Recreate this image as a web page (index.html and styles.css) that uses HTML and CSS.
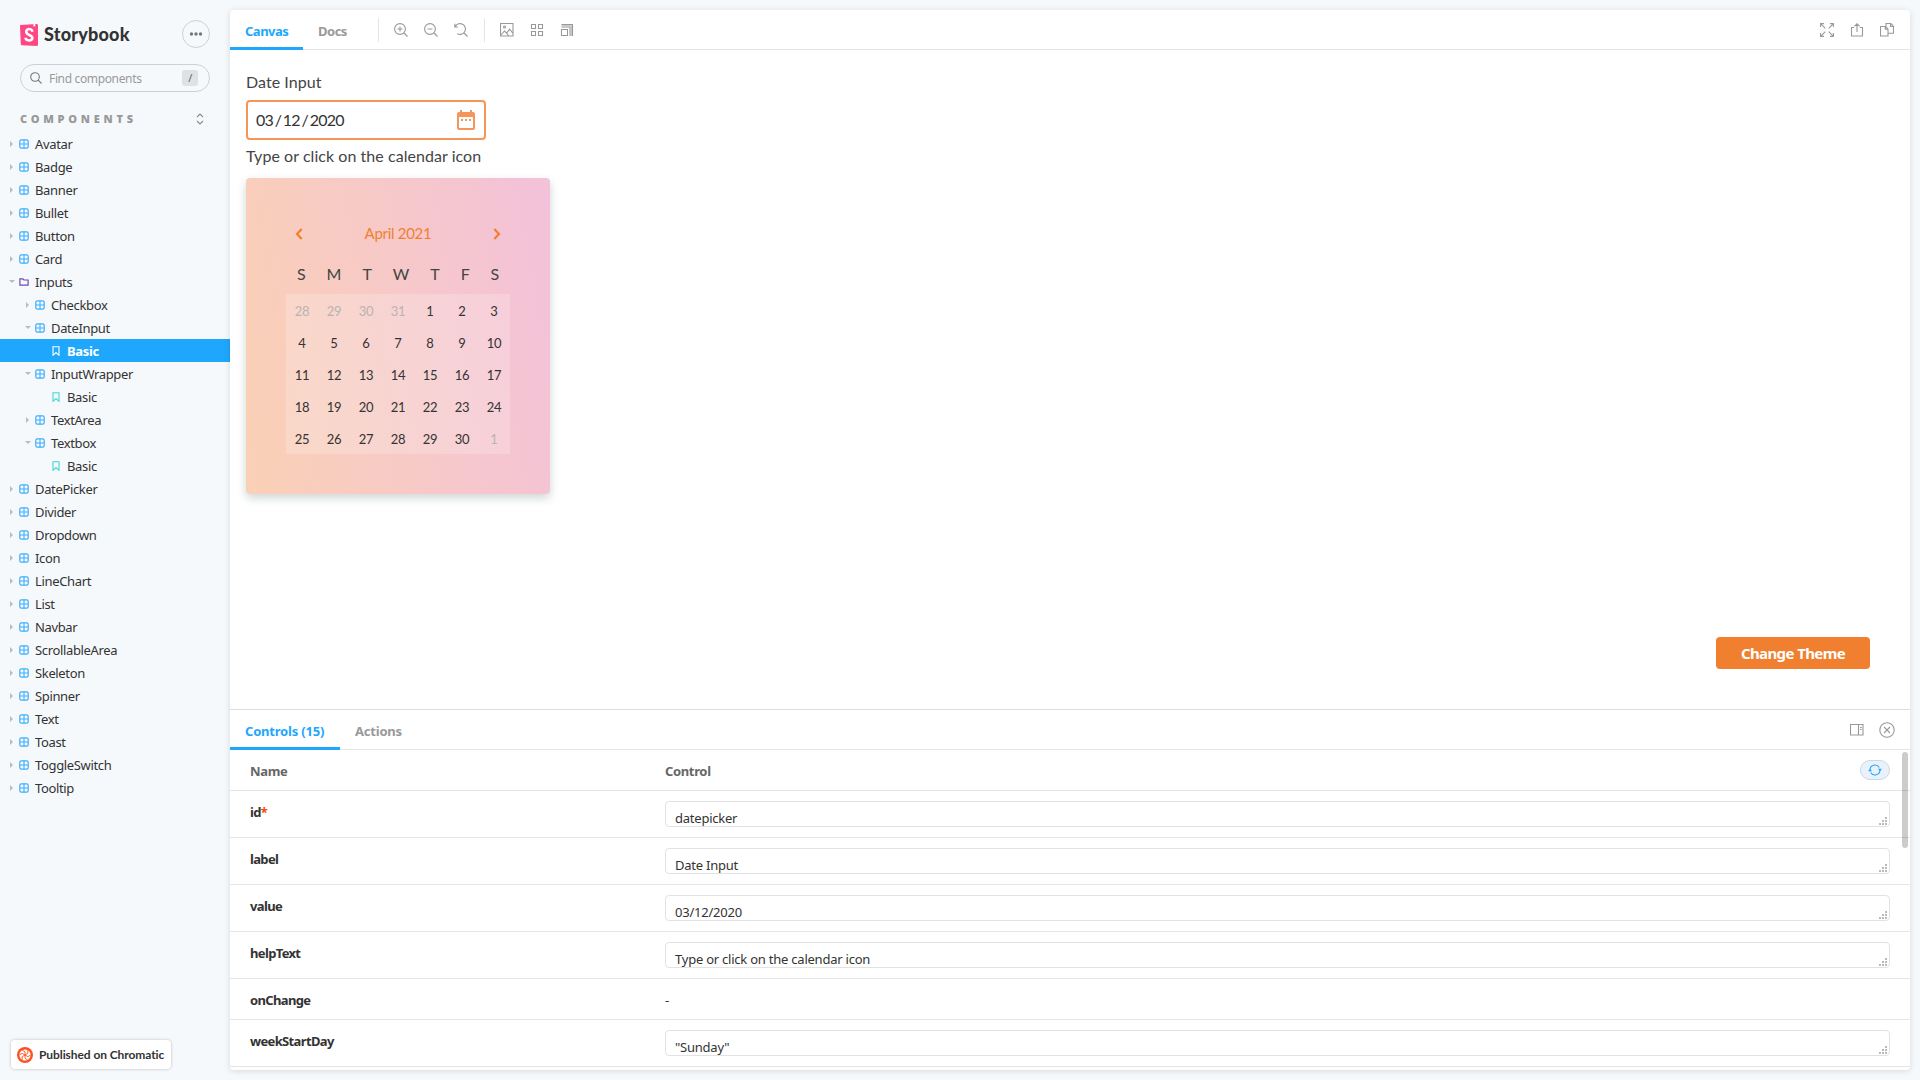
FILE: index.html
```html
<!DOCTYPE html>
<html lang="en">
<head>
<meta charset="utf-8">
<title>DateInput - Basic ⋅ Storybook</title>
<link rel="stylesheet" href="styles.css">
</head>
<body>
<svg class="sprite" aria-hidden="true">
  <symbol id="component" viewBox="0 0 10 10"><rect x=".8" y=".8" width="8.4" height="8.4" rx="1.6" fill="none" stroke="currentColor" stroke-width="1.2"/><path d="M5 1v8M1 5h8" stroke="currentColor" stroke-width="1.1"/></symbol>
  <symbol id="folder" viewBox="0 0 10 10"><path d="M.9 1.9h3l1 1.1h4.2v5.1H.9z" fill="none" stroke="currentColor" stroke-width="1.2"/></symbol>
  <symbol id="bookmark" viewBox="0 0 10 10"><path d="M2 .7h6v8.6L5 6.6 2 9.300z" fill="none" stroke="currentColor" stroke-width="1.1"/></symbol>
  <symbol id="grip" viewBox="0 0 8 8"><path d="M6 0h2v2H6zM3 3h2v2H3zM6 3h2v2H6zM0 6h2v2H0zM3 6h2v2H3zM6 6h2v2H6z" fill="#bbb"/></symbol>
</svg>

<aside class="sidebar">
  <header class="brand">
    <svg class="brand-mark" viewBox="0 0 18 22"><path d="M.2 1.1 16.600 0Q18 0 18 1.300v19.400Q18 22 16.600 22L1.900 21.300Q.9 21.200.8 20.200L0 2Q0 1.200.2 1.100z" fill="#ff4785"/><path d="M13.400.2 13.300 2.800l1-.8.9.7L15.300 0z" fill="#fff"/><path d="M12.300 7.800C12.300 4.300 6.200 4.200 6.200 7.700c0 3.800 6.200 2.900 6.200 6.300 0 3.400-6.800 3.200-6.800-.2" fill="none" stroke="#fff" stroke-width="2.500"/></svg>
    <span class="brand-name">Storybook</span>
    <button class="menu-button"><svg width="14" height="4" viewBox="0 0 14 4"><circle cx="2.500" cy="2" r="1.700"/><circle cx="7" cy="2" r="1.700"/><circle cx="11.500" cy="2" r="1.700"/></svg></button>
  </header>
  <div class="search">
    <svg class="search-icon" width="12" height="12" viewBox="0 0 12 12"><circle cx="5" cy="5" r="4.300"/><path d="m8.200 8.200 3.300 3.300"/></svg>
    <span class="search-text">Find components</span>
    <kbd>/</kbd>
  </div>
  <div class="section"><span>COMPONENTS</span><svg width="8" height="12" viewBox="0 0 8 12"><path d="m1 4 3-3 3 3M1 8l3 3 3-3"/></svg></div>
  <ul class="tree">
    <li><i class="caret"></i><svg><use href="#component"/></svg>Avatar</li>
    <li><i class="caret"></i><svg><use href="#component"/></svg>Badge</li>
    <li><i class="caret"></i><svg><use href="#component"/></svg>Banner</li>
    <li><i class="caret"></i><svg><use href="#component"/></svg>Bullet</li>
    <li><i class="caret"></i><svg><use href="#component"/></svg>Button</li>
    <li><i class="caret"></i><svg><use href="#component"/></svg>Card</li>
    <li class="group"><i class="caret open"></i><svg><use href="#folder"/></svg>Inputs</li>
    <li class="level-1"><i class="caret"></i><svg><use href="#component"/></svg>Checkbox</li>
    <li class="level-1"><i class="caret open"></i><svg><use href="#component"/></svg>DateInput</li>
    <li class="story selected"><svg><use href="#bookmark"/></svg>Basic</li>
    <li class="level-1"><i class="caret open"></i><svg><use href="#component"/></svg>InputWrapper</li>
    <li class="story"><svg><use href="#bookmark"/></svg>Basic</li>
    <li class="level-1"><i class="caret"></i><svg><use href="#component"/></svg>TextArea</li>
    <li class="level-1"><i class="caret open"></i><svg><use href="#component"/></svg>Textbox</li>
    <li class="story"><svg><use href="#bookmark"/></svg>Basic</li>
    <li><i class="caret"></i><svg><use href="#component"/></svg>DatePicker</li>
    <li><i class="caret"></i><svg><use href="#component"/></svg>Divider</li>
    <li><i class="caret"></i><svg><use href="#component"/></svg>Dropdown</li>
    <li><i class="caret"></i><svg><use href="#component"/></svg>Icon</li>
    <li><i class="caret"></i><svg><use href="#component"/></svg>LineChart</li>
    <li><i class="caret"></i><svg><use href="#component"/></svg>List</li>
    <li><i class="caret"></i><svg><use href="#component"/></svg>Navbar</li>
    <li><i class="caret"></i><svg><use href="#component"/></svg>ScrollableArea</li>
    <li><i class="caret"></i><svg><use href="#component"/></svg>Skeleton</li>
    <li><i class="caret"></i><svg><use href="#component"/></svg>Spinner</li>
    <li><i class="caret"></i><svg><use href="#component"/></svg>Text</li>
    <li><i class="caret"></i><svg><use href="#component"/></svg>Toast</li>
    <li><i class="caret"></i><svg><use href="#component"/></svg>ToggleSwitch</li>
    <li><i class="caret"></i><svg><use href="#component"/></svg>Tooltip</li>
  </ul>
  <a class="chromatic">
    <svg width="16" height="16" viewBox="0 0 16 16"><circle cx="8" cy="8" r="8" fill="#fc521f"/><circle cx="8" cy="8" r="5.600" fill="#fff"/><path d="M8 8V4.800L5.200 3.200M8 8l2.800-1.600V3.200M8 8l2.800 1.600 2.800-1.400M8 8v3.200l2.600 1.800M8 8l-2.800 1.600v3.200M8 8 5.200 6.400 2.400 7.800" fill="none" stroke="#fc521f" stroke-width=".9"/></svg>
    <span>Published on Chromatic</span>
  </a>
</aside>

<main class="panel">
  <nav class="bar toolbar">
    <a class="tab active">Canvas</a><a class="tab">Docs</a>
    <div class="tools">
      <svg viewBox="0 0 14 14"><circle cx="6" cy="6" r="5.400"/><path d="m10 10 3.500 3.500M3.500 6h5M6 3.500v5"/></svg>
      <svg viewBox="0 0 14 14"><circle cx="6" cy="6" r="5.400"/><path d="m10 10 3.500 3.500M3.500 6h5"/></svg>
      <svg viewBox="0 0 14 14"><path d="M1.300 3.400A5.400 5.400 0 1 1 3.200 10.600M.8.800v3.200H4M10 10l3.500 3.500"/></svg>
    </div>
    <div class="tools">
      <svg viewBox="0 0 14 14"><path d="M.5.5h12.500v12.500H.5zM.8 12 4.500 8l2 2.200 3.200-4L13 10.500M6 9.500l2.500 3"/><circle cx="4.500" cy="4" r="1"/></svg>
      <svg viewBox="0 0 14 14"><path d="M1.500 1.500h4v4h-4zM8.500 1.500h4v4h-4zM1.500 8.500h4v4h-4zM8.500 8.500h4v4h-4z"/></svg>
      <svg viewBox="0 0 14 14"><path d="M1.500 6.500h6v6h-6zM1.500 4h8.500v9M1.500 1.500h11V13" /><path class="soft" d="M1.500 2.800h9.800V13"/></svg>
    </div>
    <div class="tools end">
      <svg viewBox="0 0 14 14"><path d="M.6 4V.6H4M.8.800l4.500 4.500M10 .6h3.400V4M13.200.8 8.700 5.300M.6 10v3.400H4M.8 13.200l4.500-4.500M10 13.400h3.400V10M13.200 13.200 8.700 8.700"/></svg>
      <svg viewBox="0 0 14 14"><path d="M4 4.500H1.500v8.500h11V4.500H10M7 9V.8M4.400 3.400 7 .8l2.600 2.600"/></svg>
      <svg viewBox="0 0 14 14"><path d="M6 3.500V.5h4.800l2.700 2.700v7H8.500M10.500.8v2.700h2.700M.5 3.500h5l2.500 2.500v7H.5zM5.300 3.800v2.500h2.500"/></svg>
    </div>
  </nav>

  <section class="preview">
    <div class="label">Date Input</div>
    <div class="date-field">
      <span>03 / 12 / 2020</span>
      <svg width="18" height="20" viewBox="0 0 18 20"><path fill-rule="evenodd" d="M2 2h1V0h2v2h8V0h2v2h1q2 0 2 2v14q0 2-2 2H2q-2 0-2-2V4q0-2 2-2zm0 5v11h14V7z"/><path d="M4 9h2v2H4zM8 9h2v2H8zM12 9h2v2h-2z"/></svg>
    </div>
    <div class="label hint">Type or click on the calendar icon</div>
    <div class="calendar">
      <div class="month"><svg width="8" height="12" viewBox="0 0 8 12"><path d="M6.700 1 2 6l4.700 5"/></svg><span>April 2021</span><svg width="8" height="12" viewBox="0 0 8 12"><path d="M1.300 1 6 6l-4.700 5"/></svg></div>
      <div class="weekdays"><span>S</span><span>M</span><span>T</span><span>W</span><span>T</span><span>F</span><span>S</span></div>
      <div class="days">
        <span class="out">28</span><span class="out">29</span><span class="out">30</span><span class="out">31</span><span>1</span><span>2</span><span>3</span>
        <span>4</span><span>5</span><span>6</span><span>7</span><span>8</span><span>9</span><span>10</span>
        <span>11</span><span>12</span><span>13</span><span>14</span><span>15</span><span>16</span><span>17</span>
        <span>18</span><span>19</span><span>20</span><span>21</span><span>22</span><span>23</span><span>24</span>
        <span>25</span><span>26</span><span>27</span><span>28</span><span>29</span><span>30</span><span class="out">1</span>
      </div>
    </div>
    <button class="theme-button">Change Theme</button>
  </section>

  <section class="addons">
    <nav class="bar">
      <a class="tab active controls-tab">Controls (15)</a><a class="tab actions-tab">Actions</a>
      <div class="tools end">
        <svg viewBox="0 0 14 14"><path d="M.5 1.500h12.500v10.500H.5zM8.500 2v10M10 4.500h1.700M10 6.500h1.700"/></svg>
        <svg class="close" viewBox="0 0 16 16"><circle cx="8" cy="8" r="7.200"/><path d="m5 5 6 6M11 5l-6 6"/></svg>
      </div>
    </nav>
    <div class="table">
      <div class="row head"><span>Name</span><span>Control</span><button class="reset"><svg width="14" height="12" viewBox="0 0 14 12"><path d="M2 6a5 5 0 0 1 9.300-2.500M12 6a5 5 0 0 1-9.300 2.500"/><path class="tip" d="M0 7.200 2 5l2.200 2.200zM9.800 4.800h4.200L12 7z"/></svg></button></div>
      <div class="row"><b>id<em>*</em></b><div class="field">datepicker<svg><use href="#grip"/></svg></div></div>
      <div class="row"><b>label</b><div class="field">Date Input<svg><use href="#grip"/></svg></div></div>
      <div class="row"><b>value</b><div class="field date-value">03/12/2020<svg><use href="#grip"/></svg></div></div>
      <div class="row"><b>helpText</b><div class="field">Type or click on the calendar icon<svg><use href="#grip"/></svg></div></div>
      <div class="row short"><b>onChange</b><span>-</span></div>
      <div class="row"><b>weekStartDay</b><div class="field">"Sunday"<svg><use href="#grip"/></svg></div></div>
      <div class="scrollbar"></div>
    </div>
  </section>
</main>
</body>
</html>
```
FILE: styles.css
```css
* { box-sizing: border-box; }
body {
  margin: 0;
  width: 1920px;
  height: 1080px;
  overflow: hidden;
  display: flex;
  background: #f6f9fc;
  color: #333;
  font: 13px/20px "Noto Sans", "Open Sans", sans-serif;
  letter-spacing: -.35px;
}
button { padding: 0; font: inherit; letter-spacing: inherit; }
.sprite { position: absolute; width: 0; height: 0; }

/* Sidebar */
.sidebar { width: 230px; height: 1080px; display: flex; flex-direction: column; flex: none; }
.brand { height: 28px; margin: 20px 20px 0; display: flex; align-items: center; }
.brand-mark { width: 18px; height: 22px; margin-top: 1px; }
.brand-name { margin-left: 6px; font: 900 18px/28px Lato, sans-serif; letter-spacing: .2px; }
.menu-button {
  width: 28px; height: 28px; margin-left: auto;
  display: grid; place-items: center;
  border: 1px solid #ccd1d5; border-radius: 50%; background: none; fill: #777;
}
.search {
  height: 28px; margin: 16px 20px 0; padding: 0 11px 0 9px;
  display: flex; align-items: center;
  border: 1px solid #ccd1d5; border-radius: 14px;
  color: #999; font-size: 12px;
}
.search-icon { fill: none; stroke: #777; stroke-width: 1.1; margin-right: 7px; }
.search-text { padding-top: 1px; }
kbd {
  width: 16px; height: 16px; margin-left: auto;
  border-radius: 3px; background: #dfe2e5; color: #666;
  font: 11px/16px "Noto Sans", sans-serif; text-align: center;
}
.section {
  height: 18px; margin: 18px 26px 4px 20px;
  display: flex; align-items: center; justify-content: space-between;
  color: #999; font-size: 11px; font-weight: 900; letter-spacing: 3.75px;
}
.section svg { fill: none; stroke: #888; stroke-width: 1.1; margin-top: -1px; }
.tree { margin: 0; padding: 0; list-style: none; }
.tree li { height: 23px; padding-left: 10px; display: flex; align-items: center; line-height: 23px; padding-top: 1px; }
.tree svg { width: 10px; height: 10px; margin: 0 6px 0 0; color: #3aaefa; }
.tree .group svg { color: #6f4bb8; }
.tree .level-1 { padding-left: 26px; }
.tree .story { padding-left: 51px; }
.tree .story svg { color: #44d6d0; }
.tree .selected { background: #1ea7fd; color: #fff; font-weight: 700; }
.tree .selected svg { color: #fff; }
.caret { width: 9px; flex: none; height: 6px; display: flex; }
.caret::before { content: ""; border-left: 3px solid #bbb; border-top: 3px solid transparent; border-bottom: 3px solid transparent; }
.caret.open::before { height: 3px; margin: 1px 0 0 -1px; border: 3px solid transparent; border-top-color: #bbb; border-bottom: 0; }
.chromatic {
  width: 160px; height: 29px; margin: auto 0 11px 11px; padding-left: 6px;
  display: flex; align-items: center; gap: 6px;
  border-radius: 4px; background: #fff; box-shadow: 0 0 3px rgba(0, 0, 0, .25);
  font: 700 12px/28px Lato, sans-serif; letter-spacing: -.08px;
}

/* Main panel */
.panel {
  width: 1680px; height: 1060px; margin-top: 10px; overflow: hidden;
  display: flex; flex-direction: column;
  border-radius: 4px; background: #fff; box-shadow: 0 1px 6px rgba(0, 0, 0, .13);
}
.bar { height: 40px; flex: none; display: flex; border-bottom: 1px solid #e5e5e5; }
.tab { height: 40px; padding: 2px 15px 0; line-height: 38px; font-weight: 700; color: #999; letter-spacing: -.5px; }
.tab.active { color: #1ea7fd; border-bottom: 3px solid #1ea7fd; }
.toolbar .active { width: 73px; }
.toolbar .tab:nth-child(2) { width: 75px; }
.bar .controls-tab { width: 110px; letter-spacing: -.2px; }
.bar .actions-tab { letter-spacing: -.2px; }
.tools { height: 24px; margin: 8px 0 0; padding-left: 15px; display: flex; align-items: center; gap: 16px; border-left: 1px solid #e5e5e5; }
.tools + .tools { margin-left: 16px; }
.tools.end { margin: 8px 16px 0 auto; border: 0; }
.tools svg { width: 14px; height: 14px; fill: none; stroke: #999; stroke-width: 1.1; }
.tools .soft { stroke: #bbb; }
.tools .close { width: 16px; height: 16px; margin-left: -1px; margin-right: -1px; }

/* Story preview */
.preview { height: 659px; padding: 22px 40px 0 16px; flex: none; display: flex; flex-direction: column; align-items: flex-start; }
.label { font: 16px/20px Lato, sans-serif; letter-spacing: .05px; color: #444; }
.date-field {
  width: 240px; height: 40px; margin: 8px 0 6px; padding: 0 9px 0 8px;
  display: flex; align-items: center; justify-content: space-between;
  border: 2px solid #f4965a; border-radius: 4px;
  font: 16px/36px Lato, sans-serif; letter-spacing: -.75px; word-spacing: -1.7px; color: #333;
}
.date-field span { margin-top: -1px; }
.date-field svg { fill: #f4965a; }
.calendar {
  width: 304px; height: 316px; margin-top: 12px; padding: 45px 40px 40px;
  border-radius: 4px;
  background: linear-gradient(80deg, #fad1b5 0%, #f3c1da 100%);
  box-shadow: 0 4px 10px rgba(40, 70, 70, .22);
}
.month { height: 20px; padding: 0 9px; display: flex; align-items: center; justify-content: space-between; color: #f08030; font: 15px/20px Lato, sans-serif; letter-spacing: -.3px; }
.month svg { fill: none; stroke: #f08030; stroke-width: 2.2; margin-top: 2px; }
.weekdays { height: 51px; padding: 21px 11px 0; display: flex; justify-content: space-between; font: 16px/20px Lato, sans-serif; letter-spacing: -.35px; color: #444; }
.days { display: grid; grid-template-columns: repeat(7, 32px); grid-auto-rows: 32px; background: rgba(255, 255, 255, .2); font: 13px/34px Lato, sans-serif; letter-spacing: -.2px; text-align: center; }
.days .out { color: #b9b3b3; }
.theme-button {
  width: 154px; height: 32px; margin: 143px 0 0 auto;
  border: 0; border-radius: 4px; background: #f08030; color: #fff;
  font: 700 15px/32px "Noto Sans", sans-serif; letter-spacing: -.6px;
}

/* Addon panel */
.addons { flex: 1; min-height: 0; border-top: 1px solid #ddd; }
.table { position: relative; }
.row { height: 47px; padding: 0 20px; display: grid; grid-template-columns: 415px 1fr; border-bottom: 1px solid #e5e5e5; }
.row.head { height: 41px; grid-template-columns: 415px 1fr 30px; align-items: center; font-weight: 700; color: #666; }
.row.head span { padding-top: 2px; }
.row.short { height: 41px; }
.row > b { padding-top: 11px; letter-spacing: -.65px; }
.row > b em { color: #ff4400; font-style: normal; }
.row.short > span { padding-top: 11px; }
.field { height: 26px; margin-top: 10px; padding: 6px 9px 0; position: relative; overflow: hidden; border: 1px solid #e2e2e2; border-radius: 4px; line-height: 20px; letter-spacing: -.23px; }
.field svg { position: absolute; right: 2px; bottom: 1px; width: 8px; height: 8px; }
.reset { height: 20px; display: grid; place-items: center; border: 1px solid #ccd8e2; border-radius: 10px; background: #e9f2fb; }
.reset svg { fill: none; stroke: #1ea7fd; stroke-width: 1.1; }
.reset .tip { fill: #1ea7fd; stroke: none; }
.scrollbar { position: absolute; top: 2px; right: 2px; width: 6px; height: 96px; border-radius: 3px; background: rgba(0, 0, 0, .2); }
```
